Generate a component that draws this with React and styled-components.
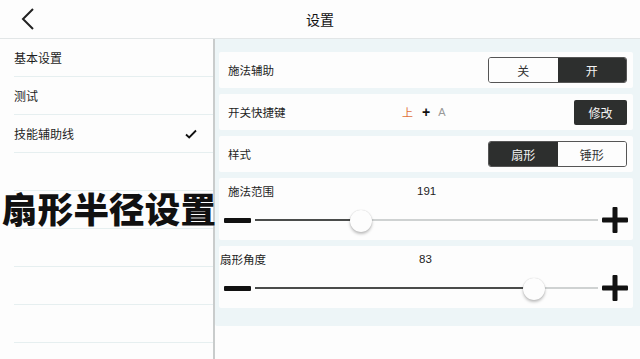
import React from "react";
import styled, { createGlobalStyle } from "styled-components";

const GlobalStyle = createGlobalStyle`
  html, body {
    margin: 0;
    padding: 0;
    background: #fdfdfd;
  }
  body {
    font-family: "Noto Sans CJK SC", "Noto Sans", sans-serif;
    color: #222;
  }
`;

const menu = ["基本设置", "测试", "技能辅助线", "", "", "", "", ""];

const Page = () => {
  return (
    <Screen>
      <GlobalStyle />
      <Header>
        <Back>
          <svg width="16" height="24" viewBox="0 0 16 24">
            <path d="M13 2 L3 12 L13 22" fill="none" stroke="#222" strokeWidth="2" />
          </svg>
        </Back>
        <Title>设置</Title>
        <span />
      </Header>
      <Body>
        <Sidebar>
          {menu.map((item, i) => (
            <MenuRow key={i}>
              <span>{item}</span>
              {i === 2 && (
                <svg width="12" height="10" viewBox="0 0 12 10">
                  <path d="M1 5.5 L4.2 8.5 L11 1.5" fill="none" stroke="#111" strokeWidth="1.8" />
                </svg>
              )}
            </MenuRow>
          ))}
        </Sidebar>
        <Content>
          <Panel>
            <Card>
              <Label>施法辅助</Label>
              <Toggle>
                <Seg>关</Seg>
                <Seg active>开</Seg>
              </Toggle>
            </Card>
            <Card>
              <Label>开关快捷键</Label>
              <Keys>
                <KeyUp>上</KeyUp>
                <Plus>+</Plus>
                <KeyA>A</KeyA>
              </Keys>
              <EditButton>修改</EditButton>
            </Card>
            <Card>
              <Label>样式</Label>
              <Toggle>
                <Seg active>扇形</Seg>
                <Seg>锤形</Seg>
              </Toggle>
            </Card>
            <SliderCard label="施法范围" value={191} pct={0.31} />
            <SliderCard label="扇形角度" value={83} pct={0.812} tight />
          </Panel>
        </Content>
      </Body>
      <Caption>扇形半径设置</Caption>
    </Screen>
  );
};

const SliderCard = ({ label, value, pct, tight }) => (
  <SCard>
    <SHead>
      <SLabel tight={tight}>{label}</SLabel>
      <SValue>{value}</SValue>
    </SHead>
    <SRow>
      <Minus />
      <Track>
        <Fill style={{ width: `${pct * 100}%` }} />
        <Thumb style={{ left: `${pct * 100}%` }} />
      </Track>
      <PlusIcon>
        <svg width="26" height="26" viewBox="0 0 26 26">
          <rect x="10.5" y="0" width="5" height="26" rx="1" fill="#111" />
          <rect x="0" y="10.5" width="26" height="5" rx="1" fill="#111" />
        </svg>
      </PlusIcon>
    </SRow>
  </SCard>
);

export default Page;

const Screen = styled.div`
  position: relative;
  width: 640px;
  height: 359px;
  display: flex;
  flex-direction: column;
  overflow: hidden;
  background: #fdfdfd;
`;

const Header = styled.div`
  height: 38px;
  border-bottom: 1px solid #e2e6e7;
  display: grid;
  grid-template-columns: 1fr auto 1fr;
  align-items: center;
  background: #fdfdfd;
`;

const Back = styled.div`
  padding-left: 20px;
  display: flex;
  align-items: center;
`;

const Title = styled.div`
  font-size: 14px;
  color: #111;
`;

const Body = styled.div`
  flex: 1;
  display: flex;
  min-height: 0;
`;

const Sidebar = styled.div`
  width: 213px;
  border-right: 2px solid #c9cccc;
  display: flex;
  flex-direction: column;
`;

const MenuRow = styled.div`
  height: 37px;
  margin-left: 14px;
  padding-right: 16px;
  border-bottom: 1px solid #e6eff0;
  display: flex;
  align-items: center;
  justify-content: space-between;
  font-size: 12px;
  color: #1e1e1e;
`;

const Content = styled.div`
  flex: 1;
`;

const Panel = styled.div`
  background: #edf5f7;
  padding: 13px 7px 18px 4px;
  display: flex;
  flex-direction: column;
  gap: 6px;
  border-bottom-left-radius: 2px;
`;

const Card = styled.div`
  background: #fdfdfd;
  height: 36px;
  border-radius: 2px;
  padding: 0 6px 0 9px;
  display: flex;
  align-items: center;
`;

const Label = styled.div`
  font-size: 11.5px;
  color: #1e1e1e;
  width: 174px;
`;

const Toggle = styled.div`
  margin-left: auto;
  width: 137px;
  height: 24px;
  border: 1px solid #555;
  border-radius: 3px;
  display: flex;
  overflow: hidden;
`;

const Seg = styled.div`
  flex: 1;
  display: flex;
  align-items: center;
  justify-content: center;
  font-size: 12px;
  background: ${(p) => (p.active ? "#2d2f2e" : "#fdfdfd")};
  color: ${(p) => (p.active ? "#f4f4f4" : "#333")};
`;

const Keys = styled.div`
  display: flex;
  align-items: center;
  font-size: 11px;
  font-family: "Liberation Sans", "Noto Sans CJK SC", sans-serif;
`;

const KeyUp = styled.span`
  color: #e0703a;
  font-family: "Noto Sans CJK SC", sans-serif;
`;

const Plus = styled.span`
  margin-left: 9px;
  font-weight: bold;
  font-size: 14px;
  color: #111;
`;

const KeyA = styled.span`
  margin-left: 8px;
  color: #999;
`;

const EditButton = styled.div`
  margin-left: auto;
  width: 53px;
  height: 25px;
  background: #2d2f2e;
  border-radius: 2px;
  color: #f4f4f4;
  font-size: 12px;
  display: flex;
  align-items: center;
  justify-content: center;
`;

const SCard = styled.div`
  background: #fdfdfd;
  border-radius: 2px;
  height: 62px;
  padding: 0 5px;
  display: flex;
  flex-direction: column;
`;

const SHead = styled.div`
  display: flex;
  align-items: center;
  height: 26px;
  padding-top: 1px;
`;

const SLabel = styled.div`
  font-size: 11.5px;
  color: #1e1e1e;
  width: ${(p) => (p.tight ? 199 : 189)}px;
  margin-left: ${(p) => (p.tight ? -4 : 4)}px;
`;

const SValue = styled.div`
  font-family: "Liberation Sans", sans-serif;
  font-size: 11.5px;
  color: #222;
`;

const SRow = styled.div`
  display: flex;
  align-items: center;
  height: 38px;
  padding-bottom: 2px;
`;

const Minus = styled.div`
  width: 27px;
  height: 5px;
  background: #111;
  border-radius: 1px;
`;

const Track = styled.div`
  position: relative;
  flex: 1;
  height: 2px;
  margin: 0 4px;
  background: #cfd2d2;
`;

const Fill = styled.div`
  height: 2px;
  background: #4a4c4b;
`;

const Thumb = styled.div`
  position: absolute;
  top: -9px;
  width: 22px;
  height: 22px;
  margin-left: -11px;
  border-radius: 50%;
  background: #fdfdfd;
  box-shadow: 0 2px 3px rgba(0, 0, 0, 0.25), 0 0 1px rgba(0, 0, 0, 0.2);
`;

const PlusIcon = styled.div`
  display: flex;
`;

const Caption = styled.div`
  position: absolute;
  left: 2px;
  top: 189px;
  font-size: 35.5px;
  line-height: 37px;
  letter-spacing: 0.2px;
  font-weight: 900;
  color: #111;
  white-space: nowrap;
  text-shadow: 0 0 2px #fff;
`;
